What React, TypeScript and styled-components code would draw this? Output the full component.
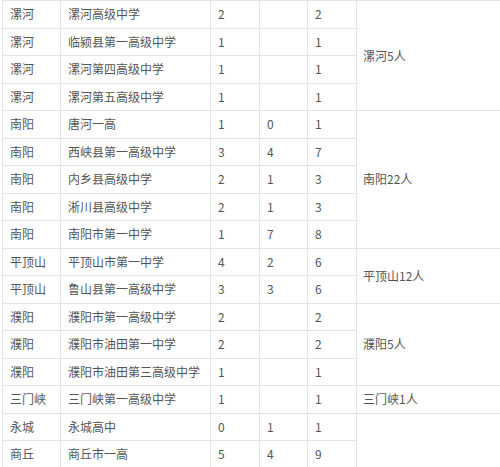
import styled, { createGlobalStyle } from 'styled-components'

const GlobalStyle = createGlobalStyle`
  html, body {
    margin: 0;
    padding: 0;
    background: #fff;
  }
`

type Row = {
  city: string
  school: string
  a: string
  b: string
  total: string
}

type Group = {
  summary: string
  rows: Row[]
}

const columnWidths = [58, 150, 49, 48, 49, 144]

const groups: Group[] = [
  {
    summary: '漯河5人',
    rows: [
      { city: '漯河', school: '漯河高级中学', a: '2', b: '', total: '2' },
      { city: '漯河', school: '临颍县第一高级中学', a: '1', b: '', total: '1' },
      { city: '漯河', school: '漯河第四高级中学', a: '1', b: '', total: '1' },
      { city: '漯河', school: '漯河第五高级中学', a: '1', b: '', total: '1' },
    ],
  },
  {
    summary: '南阳22人',
    rows: [
      { city: '南阳', school: '唐河一高', a: '1', b: '0', total: '1' },
      { city: '南阳', school: '西峡县第一高级中学', a: '3', b: '4', total: '7' },
      { city: '南阳', school: '内乡县高级中学', a: '2', b: '1', total: '3' },
      { city: '南阳', school: '淅川县高级中学', a: '2', b: '1', total: '3' },
      { city: '南阳', school: '南阳市第一中学', a: '1', b: '7', total: '8' },
    ],
  },
  {
    summary: '平顶山12人',
    rows: [
      { city: '平顶山', school: '平顶山市第一中学', a: '4', b: '2', total: '6' },
      { city: '平顶山', school: '鲁山县第一高级中学', a: '3', b: '3', total: '6' },
    ],
  },
  {
    summary: '濮阳5人',
    rows: [
      { city: '濮阳', school: '濮阳市第一高级中学', a: '2', b: '', total: '2' },
      { city: '濮阳', school: '濮阳市油田第一中学', a: '2', b: '', total: '2' },
      { city: '濮阳', school: '濮阳市油田第三高级中学', a: '1', b: '', total: '1' },
    ],
  },
  {
    summary: '三门峡1人',
    rows: [
      { city: '三门峡', school: '三门峡第一高级中学', a: '1', b: '', total: '1' },
    ],
  },
  {
    summary: '',
    rows: [
      { city: '永城', school: '永城高中', a: '0', b: '1', total: '1' },
      { city: '商丘', school: '商丘市一高', a: '5', b: '4', total: '9' },
    ],
  },
]

function App() {
  return (
    <>
      <GlobalStyle />
      <Table>
        <colgroup>
          {columnWidths.map((w, i) => (
            <Col key={i} $width={w} />
          ))}
        </colgroup>
        <tbody>
          {groups.map((group, g) =>
            group.rows.map((row, i) => (
              <Tr key={`${g}-${i}`}>
                <Cell>{row.city}</Cell>
                <Cell>{row.school}</Cell>
                <Cell>{row.a}</Cell>
                <Cell>{row.b}</Cell>
                <Cell>{row.total}</Cell>
                {i === 0 && (
                  <SummaryCell rowSpan={group.rows.length}>
                    {group.summary}
                  </SummaryCell>
                )}
              </Tr>
            ))
          )}
        </tbody>
      </Table>
    </>
  )
}

export default App

const Table = styled.table`
  width: 498px;
  margin-left: 2px;
  table-layout: fixed;
  border-collapse: collapse;
  font-family: 'Noto Sans CJK SC', 'Noto Sans', sans-serif;
  font-size: 12px;
  color: #555;
`
const Col = styled.col<{ $width: number }>`
  width: ${(props) => props.$width}px;
`
const Tr = styled.tr`
  height: 27.5px;
`
const Cell = styled.td`
  border: 1px solid #e3e3e3;
  padding: 0 7px;
  white-space: nowrap;
  vertical-align: middle;
  line-height: 16px;
`
const SummaryCell = styled(Cell)`
  padding: 0 6px;
`
